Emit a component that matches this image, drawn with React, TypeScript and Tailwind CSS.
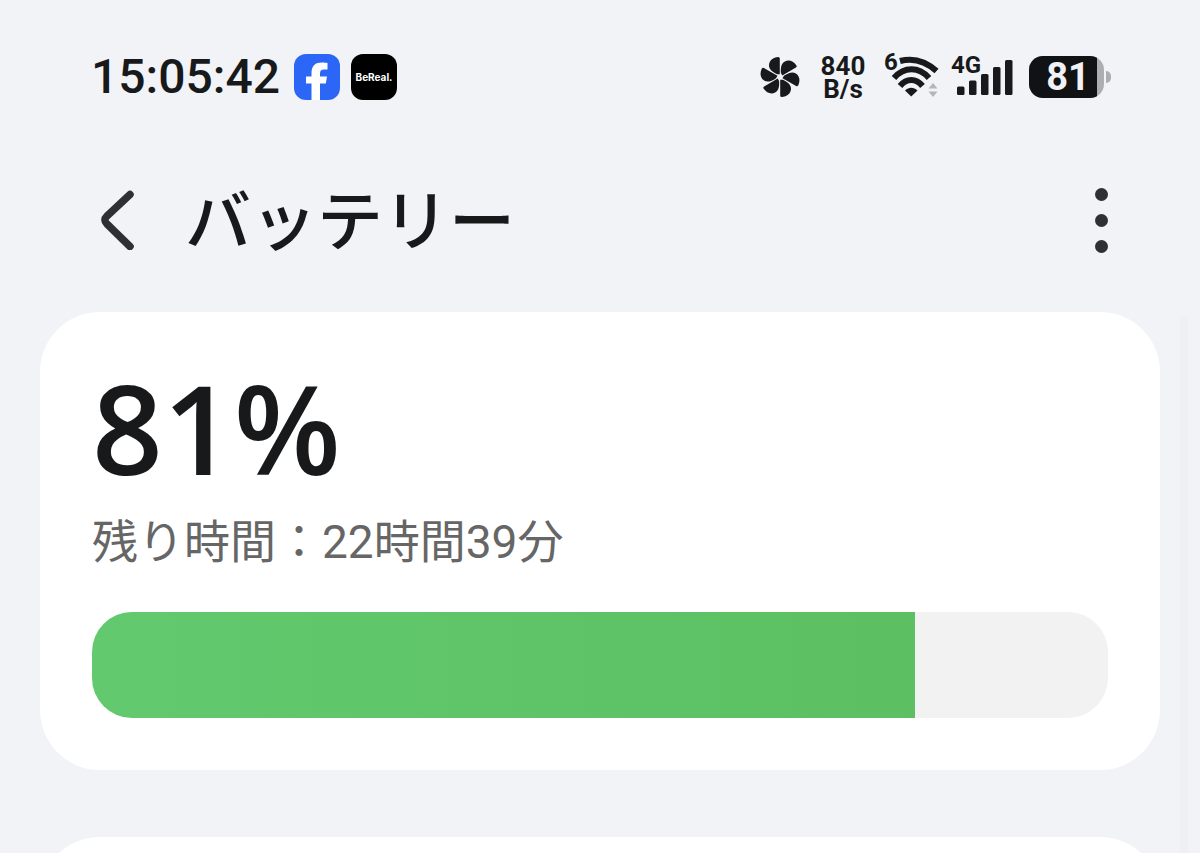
const textFont = "font-['Roboto','Noto_Sans_CJK_JP',sans-serif]";

const BLADES = [0, 60, 120, 180, 240, 300];

function FanIcon() {
  return (
    <svg viewBox="0 0 40 40" className="h-10 w-10" fill="#18191a" aria-hidden="true">
      {BLADES.map((angle) => (
        <path key={angle} transform={`rotate(${angle} 20 20)`} d="M19.800 1.500V17.200L17 17.200C12 14.800 8.800 12 9 8C9.200 3.500 13 0.400 18.300 0Q19.800 0 19.800 1.500Z" />
      ))}
    </svg>
  );
}

function FacebookIcon() {
  return (
    <svg viewBox="0 0 46 46" className="h-[46px] w-[46px]" role="img" aria-label="Facebook">
      <rect width="46" height="46" rx="12" fill="#2b66f6" />
      <path fill="#fff" d="M17.500 46V29.500H12V22.500H17.500V19C17.500 11.500 21.500 8.500 28 8.500C30.500 8.500 32 8.700 33.500 9V15.500H30C27 15.500 26 16.800 26 19.500V22.500H33L31.800 29.500H26V46Z" />
    </svg>
  );
}

function WifiIcon() {
  return (
    <svg viewBox="0 0 56 46" className="h-[46px] w-[56px]" fill="none" aria-hidden="true">
      <path d="M16 7C29 3.500 42 7.500 52.500 17" stroke="#18191a" strokeWidth="6" />
      <path d="M10 24C20 12.300 35 12.300 45 24" stroke="#18191a" strokeWidth="6" />
      <path d="M16 32C22.500 24 32 24 38.500 32" stroke="#18191a" strokeWidth="6" />
      <path d="M21 36.500C25 32.800 29.500 32.800 33.500 36.500L27.200 42.500Z" fill="#18191a" />
      <path d="M44.500 34.500L49 29L53.500 34.500ZM44.500 37.500L49 43L53.500 37.500Z" fill="#b4b5b8" />
    </svg>
  );
}

function SignalIcon() {
  return (
    <svg viewBox="0 0 57 36" className="h-[36px] w-[57px]" fill="#18191a" aria-hidden="true">
      <rect x="0" y="27.500" width="7.500" height="8.500" rx="1.500" />
      <rect x="12" y="21.500" width="7.500" height="14.500" rx="1.500" />
      <rect x="24" y="15" width="7.500" height="21" rx="1.500" />
      <rect x="36" y="8" width="7.500" height="28" rx="1.500" />
      <rect x="48" y="1" width="7.500" height="35" rx="1.500" />
    </svg>
  );
}

function StatusBar() {
  return (
    <div className="flex items-center justify-between pt-[54px] pr-[89px] pl-[91px]">
      <div className="flex items-center">
        <time className="text-[48px] leading-[46px] font-medium">15:05:42</time>
        <div className="ml-[14px] flex gap-[11px]">
          <FacebookIcon />
          <span className="flex h-[46px] w-[46px] items-center justify-center rounded-xl bg-black font-['Inter',sans-serif] text-[10px] font-bold text-white">
            BeReal.
          </span>
        </div>
      </div>
      <div className="flex h-[46px] items-center">
        <FanIcon />
        <div className="ml-[19px] flex w-12 flex-col pt-[2px] text-center text-[26px] leading-[23px] font-bold">
          <span>840</span>
          <span>B/s</span>
        </div>
        <div className="relative ml-[17px]">
          <WifiIcon />
          <span className="absolute top-0 left-0 text-[24px] leading-4 font-bold">6</span>
        </div>
        <div className="relative ml-[17px]">
          <SignalIcon />
          <span className="absolute -top-[2px] -left-[6px] text-[24px] leading-4 font-bold">4G</span>
        </div>
        <div className="ml-[15px] flex items-center gap-[2px]">
          <div className="flex h-[42px] w-[75px] overflow-hidden rounded-[14px] bg-[#adaeb1]">
            <div className="flex w-[68px] items-center justify-center bg-[#111213] pl-[10px] text-[38px] leading-[42px] font-bold text-[#f1f2f6]">
              81
            </div>
          </div>
          <div className="h-3 w-[5px] rounded-r-full bg-[#adaeb1]" />
        </div>
      </div>
    </div>
  );
}

function TitleBar() {
  return (
    <header className="flex h-[212px] items-center justify-between pt-[28px] pr-[92px] pl-[100px]">
      <div className="flex items-center">
        <button type="button" aria-label="戻る">
          <svg viewBox="0 0 34 60" className="h-[60px] w-[34px]" fill="none" aria-hidden="true">
            <path d="M30 4.500L7 26Q2.800 30 7 34L30 56.500" stroke="#2f3031" strokeWidth="7.500" strokeLinecap="round" strokeLinejoin="round" />
          </svg>
        </button>
        <h1 className="ml-[51px] pb-2 font-['Noto_Sans_CJK_JP',sans-serif] text-[66px] leading-[72px] font-medium">バッテリー</h1>
      </div>
      <button type="button" aria-label="その他" className="flex flex-col items-center gap-[13px]">
        <span className="h-[13px] w-[13px] rounded-full bg-[#2f3031]" />
        <span className="h-[13px] w-[13px] rounded-full bg-[#2f3031]" />
        <span className="h-[13px] w-[13px] rounded-full bg-[#2f3031]" />
      </button>
    </header>
  );
}

export default function App() {
  const level = 81;
  return (
    <div className={`${textFont} h-screen overflow-hidden bg-[#f1f3f7] text-[#18191a]`}>
      <StatusBar />
      <TitleBar />
      <main className="relative px-10">
        <section className="rounded-[60px] bg-white px-[52px] pt-[55px] pb-[52px]">
          <p className="font-['Open_Sans',sans-serif] text-[124px] leading-[120px] font-semibold">{level}%</p>
          <p className="mt-[25px] text-[46px] leading-[60px] font-normal text-[#666]">残り時間：22時間39分</p>
          <div
            role="progressbar"
            aria-label="バッテリー残量"
            aria-valuenow={level}
            aria-valuemin={0}
            aria-valuemax={100}
            className="mt-10 h-[106px] overflow-hidden rounded-[40px] bg-[#f2f2f2]"
          >
            <div className="h-full bg-linear-to-r from-[#62c96e] to-[#5cc062]" style={{ width: `${level}%` }} />
          </div>
        </section>
        <section className="mt-[67px] h-40 rounded-[60px] bg-white" />
        <div className="absolute top-1 right-3 h-full w-2 bg-[#eff0f5]" />
      </main>
    </div>
  );
}
